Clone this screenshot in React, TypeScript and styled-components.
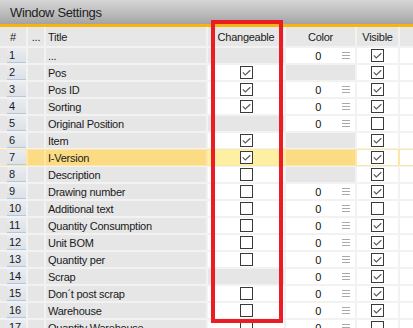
import React from "react";
import styled, { createGlobalStyle } from "styled-components";

const GlobalStyle = createGlobalStyle`
  html, body { margin: 0; padding: 0; background: #efefef; }
  body { font-family: "Liberation Sans", Arial, sans-serif; }
`;

const Window = styled.div`
  position: relative;
  width: 413px;
  height: 328px;
  overflow: hidden;
  background: #efefef;
`;

const TitleBar = styled.div`
  height: 24px;
  background: linear-gradient(to bottom, #d6d6d6 0%, #bcbcbc 55%, #a3a3a3 100%);
  display: flex;
  align-items: center;
  padding-left: 10px;
  font-family: "Liberation Sans", Arial, sans-serif;
  font-size: 13px;
  letter-spacing: -0.35px;
  color: #1e1e1e;
`;

const Accent = styled.div`
  height: 3px;
  background: #f6b40e;
`;

const COLS = "26px 16px 160px 76px 69px 41px 1fr";

const HeaderRow = styled.div`
  display: grid;
  grid-template-columns: ${COLS};
  column-gap: 2px;
  height: 19px;
  padding-bottom: 1px;
  background: #f2f2f2;
`;

const HeadCell = styled.div<{ $align?: "left" | "center" }>`
  background: #e7e7e7;
  display: flex;
  align-items: center;
  justify-content: ${(p) => (p.$align === "left" ? "flex-start" : "center")};
  padding-left: ${(p) => (p.$align === "left" ? "2px" : "0")};
  font-size: 11px;
  letter-spacing: -0.25px;
  color: #1a1a1a;
  white-space: nowrap;
`;

const Row = styled.div<{ $selected?: boolean }>`
  display: grid;
  grid-template-columns: ${COLS};
  column-gap: 2px;
  height: 15px;
  padding: 1px 0;
  background: ${(p) => (p.$selected ? "#fbe8a8" : "#f2f2f2")};
`;

type Tone = "gray" | "white" | "sel" | "selLight";

const toneBg: Record<Tone, string> = {
  gray: "#e6e6e6",
  white: "#ffffff",
  sel: "#fcdb85",
  selLight: "#fef0a3",
};

const Cell = styled.div<{ $tone: Tone }>`
  background: ${(p) => toneBg[p.$tone]};
  display: flex;
  align-items: center;
  overflow: hidden;
  white-space: nowrap;
  font-size: 11px;
  letter-spacing: -0.25px;
  color: #1a1a1a;
`;

const TitleCell = styled(Cell)`
  padding-left: 2px;
`;

const CenterCell = styled(Cell)`
  justify-content: center;
`;

const NumCell = styled.div`
  background: #e6e6e6;
  display: flex;
  padding-left: 7px;
`;

const NumBox = styled.div`
  flex: 1;
  display: flex;
  align-items: center;
  padding-left: 2px;
  font-size: 11px;
  color: #1a1a1a;
  background: linear-gradient(to bottom, #e9ecf0 0%, #dde2e8 100%);
  border-bottom: 1px solid #b3c8df;
`;

const ColorCellBox = styled(Cell)`
  justify-content: flex-end;
  padding-right: 5px;
  gap: 21px;
`;

const Zero = styled.span`
  color: #111;
  font-size: 11px;
`;

const Highlight = styled.div`
  position: absolute;
  left: 211px;
  top: 20px;
  width: 72px;
  height: 303px;
  box-sizing: border-box;
  border: 4px solid #ec1c24;
  pointer-events: none;
`;

const Check: React.FC<{ on: boolean }> = ({ on }) => (
  <svg width="13" height="13" viewBox="0 0 13 13">
    <rect x="0.5" y="0.5" width="12" height="12" fill="#fff" stroke="#3a3a3a" strokeWidth="1" />
    {on && (
      <polyline
        points="2.8,6.4 5.3,9 10.3,4.2"
        fill="none"
        stroke="#5a5a5a"
        strokeWidth="1.2"
      />
    )}
  </svg>
);

const Lines = () => (
  <svg width="8" height="7" viewBox="0 0 8 7">
    <line x1="0" y1="0.5" x2="8" y2="0.5" stroke="#a9a9a9" strokeWidth="1" />
    <line x1="0" y1="3.5" x2="8" y2="3.5" stroke="#a9a9a9" strokeWidth="1" />
    <line x1="0" y1="6.5" x2="8" y2="6.5" stroke="#a9a9a9" strokeWidth="1" />
  </svg>
);

type RowData = {
  title: string;
  change: boolean | null; // null = no checkbox (gray)
  color: boolean; // true = shows 0
  visible: boolean;
};

const rows: RowData[] = [
  { title: "...", change: null, color: true, visible: true },
  { title: "Pos", change: true, color: false, visible: true },
  { title: "Pos ID", change: true, color: true, visible: true },
  { title: "Sorting", change: true, color: true, visible: true },
  { title: "Original Position", change: null, color: true, visible: false },
  { title: "Item", change: true, color: false, visible: true },
  { title: "I-Version", change: true, color: false, visible: true },
  { title: "Description", change: false, color: false, visible: true },
  { title: "Drawing number", change: false, color: true, visible: true },
  { title: "Additional text", change: false, color: true, visible: false },
  { title: "Quantity Consumption", change: false, color: true, visible: true },
  { title: "Unit BOM", change: false, color: true, visible: true },
  { title: "Quantity per", change: false, color: true, visible: true },
  { title: "Scrap", change: null, color: true, visible: true },
  { title: "Don\u00b4t post scrap", change: false, color: true, visible: true },
  { title: "Warehouse", change: false, color: true, visible: true },
  { title: "Quantity Warehouse", change: false, color: true, visible: false },
];

export default function App() {
  return (
    <>
      <GlobalStyle />
      <Window>
        <TitleBar>Window Settings</TitleBar>
        <Accent />
        <HeaderRow>
          <HeadCell>#</HeadCell>
          <HeadCell>...</HeadCell>
          <HeadCell $align="left">Title</HeadCell>
          <HeadCell>Changeable</HeadCell>
          <HeadCell>Color</HeadCell>
          <HeadCell>Visible</HeadCell>
          <HeadCell />
        </HeaderRow>
        {rows.map((r, i) => {
          const sel = i === 6;
          return (
            <Row key={i} $selected={sel}>
              <NumCell>
                <NumBox>{i + 1}</NumBox>
              </NumCell>
              <Cell $tone={sel ? "sel" : "gray"} />
              <TitleCell $tone={sel ? "sel" : "gray"}>{r.title}</TitleCell>
              <CenterCell $tone={r.change === null ? "gray" : sel ? "selLight" : "white"}>
                {r.change !== null && <Check on={r.change} />}
              </CenterCell>
              {r.color ? (
                <ColorCellBox $tone="white">
                  <Zero>0</Zero>
                  <Lines />
                </ColorCellBox>
              ) : (
                <Cell $tone={sel ? "sel" : "gray"} />
              )}
              <CenterCell $tone="white">
                <Check on={r.visible} />
              </CenterCell>
              <Cell $tone="white" />
            </Row>
          );
        })}
        <Highlight />
      </Window>
    </>
  );
}
